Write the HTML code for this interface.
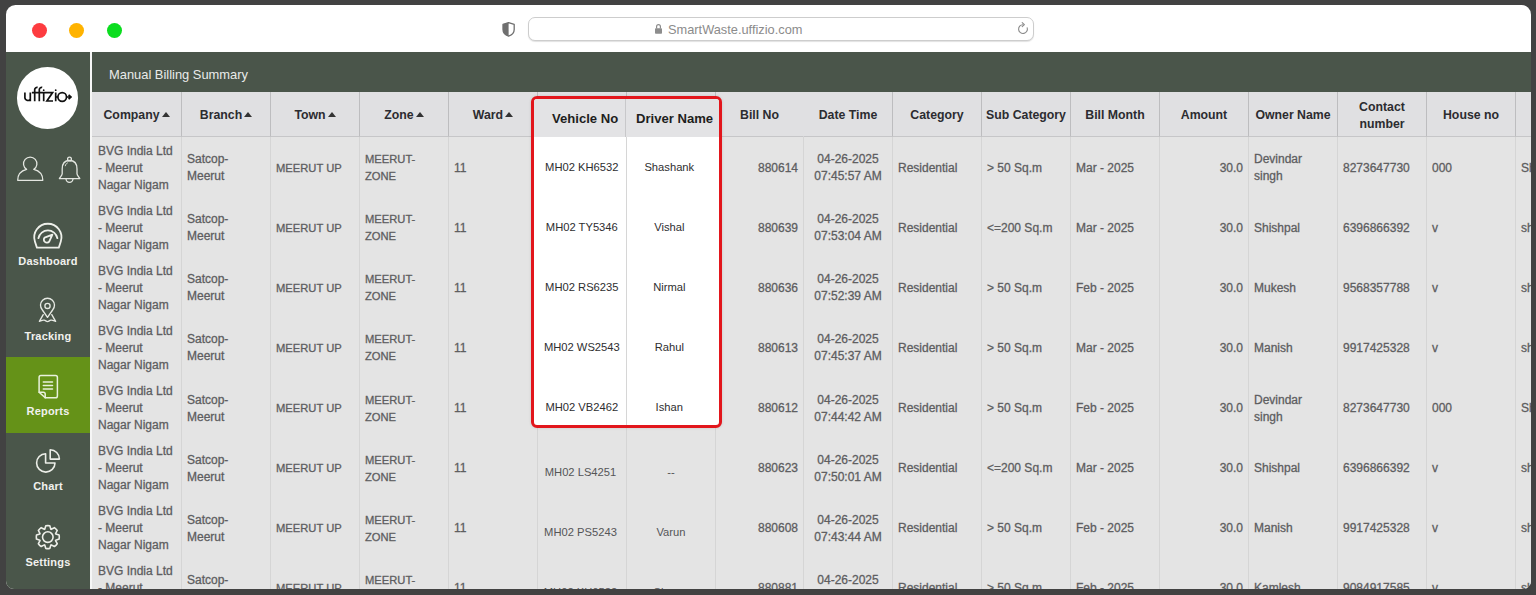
<!DOCTYPE html><html><head><meta charset="utf-8"><style>
*{margin:0;padding:0;box-sizing:border-box}
html,body{width:1536px;height:595px;overflow:hidden;background:#424242;font-family:"Liberation Sans",sans-serif}
#win{position:absolute;left:6px;top:5px;width:1525px;height:584px;border-radius:9.5px 9.5px 8px 8px;overflow:hidden;background:#fff}
#pg{position:absolute;left:-6px;top:-5px;width:1536px;height:595px}
.a{position:absolute}
.dot{position:absolute;width:15px;height:15px;border-radius:50%;top:22.5px}
#url{position:absolute;left:528px;top:17px;width:506px;height:24px;border:1px solid #cdcdcd;border-radius:7px;background:#fff;box-shadow:0 1px 1px #e2e2e2}
#urltxt{position:absolute;left:668px;top:23px;font-size:12.8px;color:#8b8b8b;line-height:14px;white-space:nowrap}
#side{position:absolute;left:0;top:52px;width:90px;height:543px;background:#4a564a}
#sep{position:absolute;left:90px;top:52px;width:2px;height:543px;background:#f6f6f6}
#hbar{position:absolute;left:92px;top:52px;width:1444px;height:40px;background:#4a554a}
#hbar span{position:absolute;left:17px;top:16px;font-size:12.9px;color:#e9ebe9;line-height:14px;white-space:nowrap}
.lbl{position:absolute;left:6px;width:84px;text-align:center;font-size:11px;font-weight:bold;color:#f1f1ee;line-height:13px;letter-spacing:0.2px}
.hc{position:absolute;background:#e0e0e2;border-right:1px solid #bdbdbf;border-bottom:1px solid #c6c6c8;display:flex;align-items:center;justify-content:center;text-align:center;font-size:12.3px;font-weight:bold;color:#2c2c30;line-height:17px;white-space:nowrap;padding-top:3px}
.bc{position:absolute;background:#e4e4e4;border-right:1px solid #d5d5d5;display:flex;align-items:center;font-size:12px;color:#565658;line-height:17px;white-space:nowrap;-webkit-text-stroke:0.3px #68686a;padding-top:2px}
.up{font-size:11.2px}
.l{justify-content:flex-start;padding-left:5px}
.l0{padding-left:6px}
.vd{padding-top:9.5px}
.bc.vx{-webkit-text-stroke:0;color:#555557}
.vv{padding-right:3px}
.c{justify-content:center;text-align:center}
.r{justify-content:flex-end;padding-right:5px}
.arr{display:inline-block;width:0;height:0;border-left:4px solid transparent;border-right:4px solid transparent;border-bottom:5px solid #333;margin-left:2px;position:relative;top:-1px}
#box{position:absolute;left:531px;top:96px;width:191px;height:332px;border:3px solid #e2161c;border-radius:6px;background:#fff;overflow:hidden;box-shadow:0 0 3px rgba(0,0,0,0.12)}
.xh{position:absolute;top:0;height:38px;background:#e3e3e5;display:flex;align-items:center;padding-top:1px;justify-content:flex-start;font-size:13.1px;font-weight:bold;color:#1e1e20;line-height:16px;white-space:nowrap}
.xb{position:absolute;display:flex;align-items:center;justify-content:center;font-size:11.2px;color:#2e2e30;line-height:17px;white-space:nowrap}
</style></head><body>
<div id="win"><div id="pg">
<div class="dot" style="left:32px;background:#fd3c40"></div>
<div class="dot" style="left:69px;background:#ffb300"></div>
<div class="dot" style="left:107px;background:#0bdd1f"></div>
<div id="url"></div>
<div id="urltxt">SmartWaste.uffizio.com</div>
<div id="side"></div><div id="sep"></div>
<div class="a" style="left:6px;top:357px;width:84px;height:76px;background:#659218"></div>
<div class="a" style="left:17.2px;top:67.3px;width:61.2px;height:61.4px;border-radius:50%;background:#fff"></div>
<div class="lbl" style="top:255px">Dashboard</div>
<div class="lbl" style="top:330px">Tracking</div>
<div class="lbl" style="top:405px">Reports</div>
<div class="lbl" style="top:480px">Chart</div>
<div class="lbl" style="top:556px">Settings</div>
<svg class="a" style="left:0;top:0" width="1536" height="595" viewBox="0 0 1536 595">
<g fill="none" stroke="#e3e6e0" stroke-width="1.3" stroke-linecap="round" stroke-linejoin="round">
<!-- user -->
<path d="M26.6 169.4 A6.7 6.7 0 1 1 33.8 169.4 C39.4 170.8 42.8 175 42.8 180.3 L17.7 180.3 C17.7 175 21 170.8 26.6 169.4 Z"/>
<!-- bell -->
<circle cx="69.5" cy="159" r="1.9"/>
<path d="M69.5 160.5 C64.5 160.5 62.2 164 62.2 169 L62.2 173.8 C62.2 175.5 60 177.2 59.4 178.6 L79.8 178.6 C79.2 177.2 77 175.5 77 173.8 L77 169 C77 164 74.6 160.5 69.5 160.5 Z"/>
<path d="M66 178.8 A3.5 3.5 0 0 0 73 178.8"/>
<path d="M65.3 165.8 C65.6 164.4 66.4 163.4 67.4 162.9" stroke-width="0.9"/>
</g>
<g fill="none" stroke="#eef0ea" stroke-width="1.8" stroke-linecap="round" stroke-linejoin="round">
<!-- dashboard gauge -->
<path d="M36.9 247.6 L34.9 241.5 A13.6 13.6 0 1 1 60.8 241.5 L58.8 247.6 Z"/>
<path d="M38.4 238.2 A9.7 9.7 0 0 1 57.4 238.2"/>
<path d="M52.4 234.6 L49.2 241.6 A3 3 0 1 1 44.6 237.6 Z"/>
</g>
<g fill="none" stroke="#e6e9e3" stroke-width="1.35" stroke-linecap="round" stroke-linejoin="round">
<!-- tracking pin -->
<path d="M47.5 317.4 L42.4 310 A7 7 0 1 1 52.6 310 Z"/>
<circle cx="47.5" cy="305.9" r="2.6"/>
<path d="M43.2 314.6 L39.4 321.4 C41.5 320.6 42.8 319.8 44.2 320.2 C45.6 320.6 46.3 321.6 47.5 321.6 C48.7 321.6 49.4 320.6 50.8 320.2 C52.2 319.8 53.5 320.6 55.6 321.4 L51.8 314.6"/>
</g>
<g fill="none" stroke="#e9f1dc" stroke-width="1.5" stroke-linecap="round" stroke-linejoin="round">
<!-- reports doc -->
<path d="M45.2 397.8 L55.6 397.8 Q57.4 397.8 57.4 396 L57.4 377.4 Q57.4 375.6 55.6 375.6 L40.9 375.6 Q39.1 375.6 39.1 377.4 L39.1 392.2 Z"/>
<path d="M39.1 392.2 L43.4 392.2 Q45.2 392.2 45.2 394 L45.2 397.8"/>
<path d="M43.3 381.9 L52.5 381.9 M43.3 385.4 L52.5 385.4 M43.3 388.9 L52.5 388.9"/>
</g>
<g fill="none" stroke="#eceee8" stroke-width="1.6" stroke-linecap="round" stroke-linejoin="round">
<!-- chart -->
<path d="M45.6 453.7 A9.2 9.2 0 1 0 55 463 L45.6 463 Z"/>
<path d="M50.2 449.8 L50.2 459.1 L59.4 459.1 A9.3 9.3 0 0 0 50.2 449.8 Z"/>
<!-- settings -->
<path d="M44.75 529.16 L45.80 525.77 A11.50 11.50 0 0 1 49.80 525.77 L50.85 529.16 A8.50 8.50 0 0 1 51.26 529.33 L54.40 527.68 A11.50 11.50 0 0 1 57.22 530.50 L55.57 533.64 A8.50 8.50 0 0 1 55.74 534.05 L59.13 535.10 A11.50 11.50 0 0 1 59.13 539.10 L55.74 540.15 A8.50 8.50 0 0 1 55.57 540.56 L57.22 543.70 A11.50 11.50 0 0 1 54.40 546.52 L51.26 544.87 A8.50 8.50 0 0 1 50.85 545.04 L49.80 548.43 A11.50 11.50 0 0 1 45.80 548.43 L44.75 545.04 A8.50 8.50 0 0 1 44.34 544.87 L41.20 546.52 A11.50 11.50 0 0 1 38.38 543.70 L40.03 540.56 A8.50 8.50 0 0 1 39.86 540.15 L36.47 539.10 A11.50 11.50 0 0 1 36.47 535.10 L39.86 534.05 A8.50 8.50 0 0 1 40.03 533.64 L38.38 530.50 A11.50 11.50 0 0 1 41.20 527.68 L44.34 529.33 A8.50 8.50 0 0 1 44.75 529.16 Z"/>
<circle cx="47.8" cy="537.1" r="5.3"/>
</g>
<!-- logo -->
<g fill="none" stroke="#111" stroke-width="1.7" stroke-linecap="butt" stroke-linejoin="miter">
<path d="M24.9 92.6 L24.9 98 A3 3 0 0 0 30.3 99.2 L30.3 92.6 L30.3 101.2"/>
<path d="M34.7 101.2 L34.7 89.6 A2.4 2.4 0 0 1 37.6 87.4"/>
<path d="M39.3 101.2 L39.3 89.6 A2.4 2.4 0 0 1 42.2 87.4"/>
<path d="M31.9 92.6 L52.6 92.6 L46.9 101 L53 101"/>
<path d="M43.7 92.6 L43.7 101.2 M55.7 92.6 L55.7 101.2 M55.7 97 L57.8 97"/>
<circle cx="62.2" cy="97" r="4.3"/>
<path d="M66.5 97 L71 97 M68.6 94.8 L71 97 L68.6 99.2"/>
</g>
<g fill="#111"><circle cx="43.7" cy="90.2" r="0.9"/><circle cx="55.7" cy="90.2" r="0.9"/></g>
<!-- browser icons -->
<path d="M508.6 22.6 L514.2 24.4 L514.2 29.6 C514.2 33 511.6 35.2 508.6 36.2 C505.6 35.2 503 33 503 29.6 L503 24.4 Z" fill="none" stroke="#6f6f6f" stroke-width="1.3" stroke-linejoin="round"/>
<path d="M508.6 22.6 L503 24.4 L503 29.6 C503 33 505.6 35.2 508.6 36.2 Z" fill="#6f6f6f"/>
<rect x="655" y="28.2" width="7" height="5.6" rx="0.8" fill="#8d8d8d"/>
<path d="M656.6 28.4 L656.6 26.6 A1.9 1.9 0 0 1 660.4 26.6 L660.4 28.4" fill="none" stroke="#8d8d8d" stroke-width="1.2"/>
<path d="M1027.2 27.8 A4.4 4.4 0 1 1 1022.9 24.7" fill="none" stroke="#8a8a8a" stroke-width="1.1" stroke-linecap="round"/>
<path d="M1022.2 22.7 L1024.4 24.7 L1022.2 26.7" fill="none" stroke="#8a8a8a" stroke-width="1.1" stroke-linecap="round" stroke-linejoin="round"/>
</svg>
<div id="hbar"><span>Manual Billing Summary</span></div>
<div class="hc" style="left:92px;top:92px;width:90px;height:45px;">Company<span class="arr"></span></div>
<div class="hc" style="left:182px;top:92px;width:89px;height:45px;">Branch<span class="arr"></span></div>
<div class="hc" style="left:271px;top:92px;width:89px;height:45px;">Town<span class="arr"></span></div>
<div class="hc" style="left:360px;top:92px;width:89px;height:45px;">Zone<span class="arr"></span></div>
<div class="hc" style="left:449px;top:92px;width:89px;height:45px;">Ward<span class="arr"></span></div>
<div class="hc" style="left:538px;top:92px;width:89px;height:45px;">Vehicle No</div>
<div class="hc" style="left:627px;top:92px;width:89px;height:45px;">Driver Name</div>
<div class="hc" style="left:716px;top:92px;width:88px;height:45px;border-right-color:#e0e0e2;">Bill No</div>
<div class="hc" style="left:804px;top:92px;width:89px;height:45px;">Date Time</div>
<div class="hc" style="left:893px;top:92px;width:89px;height:45px;">Category</div>
<div class="hc" style="left:982px;top:92px;width:89px;height:45px;">Sub Category</div>
<div class="hc" style="left:1071px;top:92px;width:89px;height:45px;">Bill Month</div>
<div class="hc" style="left:1160px;top:92px;width:89px;height:45px;">Amount</div>
<div class="hc" style="left:1249px;top:92px;width:89px;height:45px;">Owner Name</div>
<div class="hc" style="left:1338px;top:92px;width:89px;height:45px;">Contact<br>number</div>
<div class="hc" style="left:1427px;top:92px;width:89px;height:45px;">House no</div>
<div class="hc" style="left:1516px;top:92px;width:89px;height:45px;"></div>
<div class="bc l l0" style="left:92px;top:137.0px;width:90px;height:60.3px">BVG India Ltd<br>- Meerut<br>Nagar Nigam</div>
<div class="bc l" style="left:182px;top:137.0px;width:89px;height:60.3px">Satcop-<br>Meerut</div>
<div class="bc l up" style="left:271px;top:137.0px;width:89px;height:60.3px">MEERUT UP</div>
<div class="bc l up" style="left:360px;top:137.0px;width:89px;height:60.3px">MEERUT-<br>ZONE</div>
<div class="bc l" style="left:449px;top:137.0px;width:89px;height:60.3px">11</div>
<div class="bc c up vv vx" style="left:538px;top:137.0px;width:89px;height:60.3px">MH02 KH6532</div>
<div class="bc c up vx" style="left:627px;top:137.0px;width:89px;height:60.3px">Shashank</div>
<div class="bc r" style="left:716px;top:137.0px;width:88px;height:60.3px">880614</div>
<div class="bc c" style="left:804px;top:137.0px;width:89px;height:60.3px">04-26-2025<br>07:45:57 AM</div>
<div class="bc l" style="left:893px;top:137.0px;width:89px;height:60.3px">Residential</div>
<div class="bc l" style="left:982px;top:137.0px;width:89px;height:60.3px">&gt; 50 Sq.m</div>
<div class="bc l" style="left:1071px;top:137.0px;width:89px;height:60.3px">Mar - 2025</div>
<div class="bc r" style="left:1160px;top:137.0px;width:89px;height:60.3px">30.0</div>
<div class="bc l" style="left:1249px;top:137.0px;width:89px;height:60.3px">Devindar<br>singh</div>
<div class="bc l" style="left:1338px;top:137.0px;width:89px;height:60.3px">8273647730</div>
<div class="bc l" style="left:1427px;top:137.0px;width:89px;height:60.3px">000</div>
<div class="bc l" style="left:1516px;top:137.0px;width:89px;height:60.3px">Sh</div>
<div class="bc l l0" style="left:92px;top:197.1px;width:90px;height:60.3px">BVG India Ltd<br>- Meerut<br>Nagar Nigam</div>
<div class="bc l" style="left:182px;top:197.1px;width:89px;height:60.3px">Satcop-<br>Meerut</div>
<div class="bc l up" style="left:271px;top:197.1px;width:89px;height:60.3px">MEERUT UP</div>
<div class="bc l up" style="left:360px;top:197.1px;width:89px;height:60.3px">MEERUT-<br>ZONE</div>
<div class="bc l" style="left:449px;top:197.1px;width:89px;height:60.3px">11</div>
<div class="bc c up vv vx" style="left:538px;top:197.1px;width:89px;height:60.3px">MH02 TY5346</div>
<div class="bc c up vx" style="left:627px;top:197.1px;width:89px;height:60.3px">Vishal</div>
<div class="bc r" style="left:716px;top:197.1px;width:88px;height:60.3px">880639</div>
<div class="bc c" style="left:804px;top:197.1px;width:89px;height:60.3px">04-26-2025<br>07:53:04 AM</div>
<div class="bc l" style="left:893px;top:197.1px;width:89px;height:60.3px">Residential</div>
<div class="bc l" style="left:982px;top:197.1px;width:89px;height:60.3px">&lt;=200 Sq.m</div>
<div class="bc l" style="left:1071px;top:197.1px;width:89px;height:60.3px">Mar - 2025</div>
<div class="bc r" style="left:1160px;top:197.1px;width:89px;height:60.3px">30.0</div>
<div class="bc l" style="left:1249px;top:197.1px;width:89px;height:60.3px">Shishpal</div>
<div class="bc l" style="left:1338px;top:197.1px;width:89px;height:60.3px">6396866392</div>
<div class="bc l" style="left:1427px;top:197.1px;width:89px;height:60.3px">v</div>
<div class="bc l" style="left:1516px;top:197.1px;width:89px;height:60.3px">sh</div>
<div class="bc l l0" style="left:92px;top:257.2px;width:90px;height:60.3px">BVG India Ltd<br>- Meerut<br>Nagar Nigam</div>
<div class="bc l" style="left:182px;top:257.2px;width:89px;height:60.3px">Satcop-<br>Meerut</div>
<div class="bc l up" style="left:271px;top:257.2px;width:89px;height:60.3px">MEERUT UP</div>
<div class="bc l up" style="left:360px;top:257.2px;width:89px;height:60.3px">MEERUT-<br>ZONE</div>
<div class="bc l" style="left:449px;top:257.2px;width:89px;height:60.3px">11</div>
<div class="bc c up vv vx" style="left:538px;top:257.2px;width:89px;height:60.3px">MH02 RS6235</div>
<div class="bc c up vx" style="left:627px;top:257.2px;width:89px;height:60.3px">Nirmal</div>
<div class="bc r" style="left:716px;top:257.2px;width:88px;height:60.3px">880636</div>
<div class="bc c" style="left:804px;top:257.2px;width:89px;height:60.3px">04-26-2025<br>07:52:39 AM</div>
<div class="bc l" style="left:893px;top:257.2px;width:89px;height:60.3px">Residential</div>
<div class="bc l" style="left:982px;top:257.2px;width:89px;height:60.3px">&gt; 50 Sq.m</div>
<div class="bc l" style="left:1071px;top:257.2px;width:89px;height:60.3px">Feb - 2025</div>
<div class="bc r" style="left:1160px;top:257.2px;width:89px;height:60.3px">30.0</div>
<div class="bc l" style="left:1249px;top:257.2px;width:89px;height:60.3px">Mukesh</div>
<div class="bc l" style="left:1338px;top:257.2px;width:89px;height:60.3px">9568357788</div>
<div class="bc l" style="left:1427px;top:257.2px;width:89px;height:60.3px">v</div>
<div class="bc l" style="left:1516px;top:257.2px;width:89px;height:60.3px">sh</div>
<div class="bc l l0" style="left:92px;top:317.3px;width:90px;height:60.3px">BVG India Ltd<br>- Meerut<br>Nagar Nigam</div>
<div class="bc l" style="left:182px;top:317.3px;width:89px;height:60.3px">Satcop-<br>Meerut</div>
<div class="bc l up" style="left:271px;top:317.3px;width:89px;height:60.3px">MEERUT UP</div>
<div class="bc l up" style="left:360px;top:317.3px;width:89px;height:60.3px">MEERUT-<br>ZONE</div>
<div class="bc l" style="left:449px;top:317.3px;width:89px;height:60.3px">11</div>
<div class="bc c up vv vx" style="left:538px;top:317.3px;width:89px;height:60.3px">MH02 WS2543</div>
<div class="bc c up vx" style="left:627px;top:317.3px;width:89px;height:60.3px">Rahul</div>
<div class="bc r" style="left:716px;top:317.3px;width:88px;height:60.3px">880613</div>
<div class="bc c" style="left:804px;top:317.3px;width:89px;height:60.3px">04-26-2025<br>07:45:37 AM</div>
<div class="bc l" style="left:893px;top:317.3px;width:89px;height:60.3px">Residential</div>
<div class="bc l" style="left:982px;top:317.3px;width:89px;height:60.3px">&gt; 50 Sq.m</div>
<div class="bc l" style="left:1071px;top:317.3px;width:89px;height:60.3px">Mar - 2025</div>
<div class="bc r" style="left:1160px;top:317.3px;width:89px;height:60.3px">30.0</div>
<div class="bc l" style="left:1249px;top:317.3px;width:89px;height:60.3px">Manish</div>
<div class="bc l" style="left:1338px;top:317.3px;width:89px;height:60.3px">9917425328</div>
<div class="bc l" style="left:1427px;top:317.3px;width:89px;height:60.3px">v</div>
<div class="bc l" style="left:1516px;top:317.3px;width:89px;height:60.3px">sh</div>
<div class="bc l l0" style="left:92px;top:377.4px;width:90px;height:60.3px">BVG India Ltd<br>- Meerut<br>Nagar Nigam</div>
<div class="bc l" style="left:182px;top:377.4px;width:89px;height:60.3px">Satcop-<br>Meerut</div>
<div class="bc l up" style="left:271px;top:377.4px;width:89px;height:60.3px">MEERUT UP</div>
<div class="bc l up" style="left:360px;top:377.4px;width:89px;height:60.3px">MEERUT-<br>ZONE</div>
<div class="bc l" style="left:449px;top:377.4px;width:89px;height:60.3px">11</div>
<div class="bc c up vv vx" style="left:538px;top:377.4px;width:89px;height:60.3px">MH02 VB2462</div>
<div class="bc c up vx" style="left:627px;top:377.4px;width:89px;height:60.3px">Ishan</div>
<div class="bc r" style="left:716px;top:377.4px;width:88px;height:60.3px">880612</div>
<div class="bc c" style="left:804px;top:377.4px;width:89px;height:60.3px">04-26-2025<br>07:44:42 AM</div>
<div class="bc l" style="left:893px;top:377.4px;width:89px;height:60.3px">Residential</div>
<div class="bc l" style="left:982px;top:377.4px;width:89px;height:60.3px">&gt; 50 Sq.m</div>
<div class="bc l" style="left:1071px;top:377.4px;width:89px;height:60.3px">Feb - 2025</div>
<div class="bc r" style="left:1160px;top:377.4px;width:89px;height:60.3px">30.0</div>
<div class="bc l" style="left:1249px;top:377.4px;width:89px;height:60.3px">Devindar<br>singh</div>
<div class="bc l" style="left:1338px;top:377.4px;width:89px;height:60.3px">8273647730</div>
<div class="bc l" style="left:1427px;top:377.4px;width:89px;height:60.3px">000</div>
<div class="bc l" style="left:1516px;top:377.4px;width:89px;height:60.3px">Sh</div>
<div class="bc l l0" style="left:92px;top:437.5px;width:90px;height:60.3px">BVG India Ltd<br>- Meerut<br>Nagar Nigam</div>
<div class="bc l" style="left:182px;top:437.5px;width:89px;height:60.3px">Satcop-<br>Meerut</div>
<div class="bc l up" style="left:271px;top:437.5px;width:89px;height:60.3px">MEERUT UP</div>
<div class="bc l up" style="left:360px;top:437.5px;width:89px;height:60.3px">MEERUT-<br>ZONE</div>
<div class="bc l" style="left:449px;top:437.5px;width:89px;height:60.3px">11</div>
<div class="bc c up vv vx vd" style="left:538px;top:437.5px;width:89px;height:60.3px">MH02 LS4251</div>
<div class="bc c up vx vd" style="left:627px;top:437.5px;width:89px;height:60.3px">--</div>
<div class="bc r" style="left:716px;top:437.5px;width:88px;height:60.3px">880623</div>
<div class="bc c" style="left:804px;top:437.5px;width:89px;height:60.3px">04-26-2025<br>07:50:01 AM</div>
<div class="bc l" style="left:893px;top:437.5px;width:89px;height:60.3px">Residential</div>
<div class="bc l" style="left:982px;top:437.5px;width:89px;height:60.3px">&lt;=200 Sq.m</div>
<div class="bc l" style="left:1071px;top:437.5px;width:89px;height:60.3px">Mar - 2025</div>
<div class="bc r" style="left:1160px;top:437.5px;width:89px;height:60.3px">30.0</div>
<div class="bc l" style="left:1249px;top:437.5px;width:89px;height:60.3px">Shishpal</div>
<div class="bc l" style="left:1338px;top:437.5px;width:89px;height:60.3px">6396866392</div>
<div class="bc l" style="left:1427px;top:437.5px;width:89px;height:60.3px">v</div>
<div class="bc l" style="left:1516px;top:437.5px;width:89px;height:60.3px">sh</div>
<div class="bc l l0" style="left:92px;top:497.6px;width:90px;height:60.3px">BVG India Ltd<br>- Meerut<br>Nagar Nigam</div>
<div class="bc l" style="left:182px;top:497.6px;width:89px;height:60.3px">Satcop-<br>Meerut</div>
<div class="bc l up" style="left:271px;top:497.6px;width:89px;height:60.3px">MEERUT UP</div>
<div class="bc l up" style="left:360px;top:497.6px;width:89px;height:60.3px">MEERUT-<br>ZONE</div>
<div class="bc l" style="left:449px;top:497.6px;width:89px;height:60.3px">11</div>
<div class="bc c up vv vx vd" style="left:538px;top:497.6px;width:89px;height:60.3px">MH02 PS5243</div>
<div class="bc c up vx vd" style="left:627px;top:497.6px;width:89px;height:60.3px">Varun</div>
<div class="bc r" style="left:716px;top:497.6px;width:88px;height:60.3px">880608</div>
<div class="bc c" style="left:804px;top:497.6px;width:89px;height:60.3px">04-26-2025<br>07:43:44 AM</div>
<div class="bc l" style="left:893px;top:497.6px;width:89px;height:60.3px">Residential</div>
<div class="bc l" style="left:982px;top:497.6px;width:89px;height:60.3px">&gt; 50 Sq.m</div>
<div class="bc l" style="left:1071px;top:497.6px;width:89px;height:60.3px">Feb - 2025</div>
<div class="bc r" style="left:1160px;top:497.6px;width:89px;height:60.3px">30.0</div>
<div class="bc l" style="left:1249px;top:497.6px;width:89px;height:60.3px">Manish</div>
<div class="bc l" style="left:1338px;top:497.6px;width:89px;height:60.3px">9917425328</div>
<div class="bc l" style="left:1427px;top:497.6px;width:89px;height:60.3px">v</div>
<div class="bc l" style="left:1516px;top:497.6px;width:89px;height:60.3px">sh</div>
<div class="bc l l0" style="left:92px;top:557.7px;width:90px;height:60.3px">BVG India Ltd<br>- Meerut<br>Nagar Nigam</div>
<div class="bc l" style="left:182px;top:557.7px;width:89px;height:60.3px">Satcop-<br>Meerut</div>
<div class="bc l up" style="left:271px;top:557.7px;width:89px;height:60.3px">MEERUT UP</div>
<div class="bc l up" style="left:360px;top:557.7px;width:89px;height:60.3px">MEERUT-<br>ZONE</div>
<div class="bc l" style="left:449px;top:557.7px;width:89px;height:60.3px">11</div>
<div class="bc c up vv vx vd" style="left:538px;top:557.7px;width:89px;height:60.3px">MH02 KH6532</div>
<div class="bc c up vx vd" style="left:627px;top:557.7px;width:89px;height:60.3px">Shyam</div>
<div class="bc r" style="left:716px;top:557.7px;width:88px;height:60.3px">880881</div>
<div class="bc c" style="left:804px;top:557.7px;width:89px;height:60.3px">04-26-2025<br>07:41:12 AM</div>
<div class="bc l" style="left:893px;top:557.7px;width:89px;height:60.3px">Residential</div>
<div class="bc l" style="left:982px;top:557.7px;width:89px;height:60.3px">&gt; 50 Sq.m</div>
<div class="bc l" style="left:1071px;top:557.7px;width:89px;height:60.3px">Feb - 2025</div>
<div class="bc r" style="left:1160px;top:557.7px;width:89px;height:60.3px">30.0</div>
<div class="bc l" style="left:1249px;top:557.7px;width:89px;height:60.3px">Kamlesh</div>
<div class="bc l" style="left:1338px;top:557.7px;width:89px;height:60.3px">9084917585</div>
<div class="bc l" style="left:1427px;top:557.7px;width:89px;height:60.3px">v</div>
<div class="bc l" style="left:1516px;top:557.7px;width:89px;height:60.3px">sh</div>
<div id="box">
<div class="xh" style="left:0;width:92px;padding-left:18px;border-right:1px solid #c8c8ca">Vehicle No</div>
<div class="xh" style="left:92px;width:93px;padding-left:10px">Driver Name</div>
<div class="a" style="left:92px;top:38px;width:1px;height:300px;background:#d6d6d6"></div>
<div class="xb" style="left:-2.2px;top:38.0px;width:100px;height:60px">MH02 KH6532</div>
<div class="xb" style="left:85.3px;top:38.0px;width:100px;height:60px">Shashank</div>
<div class="xb" style="left:-2.2px;top:98.1px;width:100px;height:60px">MH02 TY5346</div>
<div class="xb" style="left:85.3px;top:98.1px;width:100px;height:60px">Vishal</div>
<div class="xb" style="left:-2.2px;top:158.2px;width:100px;height:60px">MH02 RS6235</div>
<div class="xb" style="left:85.3px;top:158.2px;width:100px;height:60px">Nirmal</div>
<div class="xb" style="left:-2.2px;top:218.3px;width:100px;height:60px">MH02 WS2543</div>
<div class="xb" style="left:85.3px;top:218.3px;width:100px;height:60px">Rahul</div>
<div class="xb" style="left:-2.2px;top:278.4px;width:100px;height:60px">MH02 VB2462</div>
<div class="xb" style="left:85.3px;top:278.4px;width:100px;height:60px">Ishan</div>
</div>
</div></div>
</body></html>
